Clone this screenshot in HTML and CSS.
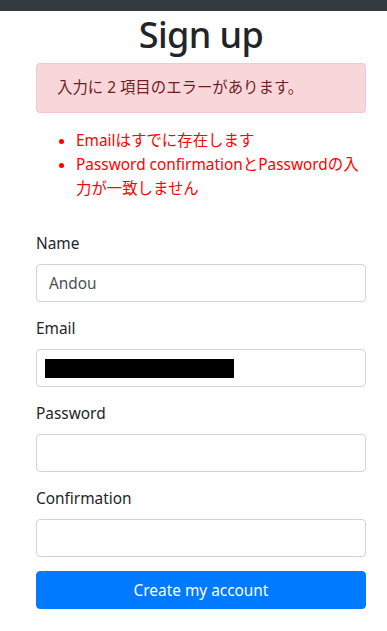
FILE: index.html
```html
<!DOCTYPE html>
<html lang="ja">
<head>
  <meta charset="UTF-8" />
  <meta name="viewport" content="width=device-width, initial-scale=1.0"/>
  <title>Sign up</title>
  <link rel="stylesheet" href="styles.css">
</head>
<body>
  <div class="topbar"></div>

  <div class="container">
    <h1>Sign up</h1>

    <!-- エラーメッセージ -->
    <div class="alert">入力に 2 項目のエラーがあります。</div>
    <ul class="errors">
      <li>Emailはすでに存在します</li>
      <li>Password confirmationとPasswordの入力が一致しません</li>
    </ul>

    <form class="signup">
      <div class="group">
        <label for="name">Name</label>
        <input type="text" id="name" value="Andou" />
      </div>
      <div class="group">
        <label for="email">Email</label>
        <div class="field masked"><span class="mask"></span></div>
      </div>
      <div class="group">
        <label for="password">Password</label>
        <input type="password" id="password" />
      </div>
      <div class="group last">
        <label for="confirmation">Confirmation</label>
        <input type="password" id="confirmation" />
      </div>
      <button type="submit" class="submit-btn">Create my account</button>
    </form>
  </div>
</body>
</html>
```

FILE: styles.css
```css
body {
  font-family: "Noto Sans", "Noto Sans CJK JP", sans-serif;
  font-size: 15.4px;
  line-height: 24px;
  margin: 0;
  background: #fff;
  color: #212529;
}

.topbar {
  height: 11px;
  background: #343a40;
}

.container {
  padding: 0 21px 0 36px;
}

h1 {
  margin: 0 0 4px;
  font-size: 36px;
  font-weight: 500;
  letter-spacing: -0.6px;
  line-height: 48px;
  text-align: center;
}

.alert {
  padding: 12px 20px;
  background: #f8d7da;
  border: 1px solid #f5c6cb;
  border-radius: 4px;
  color: #721c24;
}

.errors {
  margin: 16px 0 31px;
  padding-left: 40px;
  color: #ff0000;
}

.group {
  margin-bottom: 15px;
}

.group.last {
  margin-bottom: 14px;
}

label {
  display: block;
  margin-bottom: 8px;
}

input,
.field {
  display: block;
  box-sizing: border-box;
  width: 100%;
  height: 38px;
  padding: 6px 12px;
  font-family: inherit;
  font-size: 15.4px;
  color: #495057;
  border: 1px solid #ced4da;
  border-radius: 4px;
  background: #fff;
}

.masked {
  padding: 9px 8px;
}

.mask {
  display: block;
  width: 189px;
  height: 19px;
  background: #000;
}

.submit-btn {
  display: block;
  width: 100%;
  height: 38px;
  padding: 6px 12px;
  font-family: inherit;
  font-size: 15.4px;
  color: #fff;
  background: #007bff;
  border: 1px solid #007bff;
  border-radius: 4px;
  cursor: pointer;
}
```
